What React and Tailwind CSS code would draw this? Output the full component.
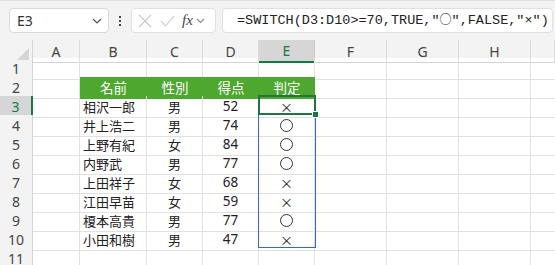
import React from 'react';

const cols = ['A', 'B', 'C', 'D', 'E', 'F', 'G', 'H', ''];

const rows = [
  ['相沢一郎', '男', 52, '×'],
  ['井上浩二', '男', 74, '○'],
  ['上野有紀', '女', 84, '○'],
  ['内野武', '男', 77, '○'],
  ['上田祥子', '女', 68, '×'],
  ['江田早苗', '女', 59, '×'],
  ['榎本高貴', '男', 77, '○'],
  ['小田和樹', '男', 47, '×'],
];

const sans = { fontFamily: '"Noto Sans", "Noto Sans CJK JP", sans-serif' };
const jp = { fontFamily: '"Noto Sans CJK JP", "Noto Sans", sans-serif' };

const Toolbar = () => (
  <div className="flex items-center h-[40px] bg-[#f3f3f3] border-t border-[#e3e3e3] pl-[9px] pr-[2px]">
    <div className="flex items-center justify-between w-[100px] h-[25px] bg-white border border-[#d9d9d9] rounded-[4px] pl-[7px] pr-[6px]">
      <span className="text-[14px] text-[#333]" style={sans}>E3</span>
      <svg width="10" height="6" viewBox="0 0 10 6"><path d="M1 1l4 4 4-4" stroke="#555" strokeWidth="1.2" fill="none" /></svg>
    </div>
    <div className="flex flex-col gap-[2px] w-[22px] items-center">
      <span className="w-[2px] h-[2px] bg-[#444]" />
      <span className="w-[2px] h-[2px] bg-[#444]" />
      <span className="w-[2px] h-[2px] bg-[#444]" />
    </div>
    <div className="flex items-center w-[85px] h-[25px] bg-white border border-[#e0e0e0] rounded-[4px] pl-[6px] gap-[8px]">
      <svg width="14" height="14" viewBox="0 0 14 14"><path d="M1 1l12 12M13 1L1 13" stroke="#c8c8c8" strokeWidth="1.1" /></svg>
      <svg width="15" height="12" viewBox="0 0 15 12"><path d="M1 6l4.5 5L14 1" stroke="#c8c8c8" strokeWidth="1.1" fill="none" /></svg>
      <span className="text-[15px] italic text-[#444] leading-none -ml-[1px]" style={{ fontFamily: '"Liberation Serif", serif' }}>fx</span>
      <svg width="9" height="6" viewBox="0 0 9 6" className="-ml-[5px]"><path d="M1 1l3.5 3.5L8 1" stroke="#888" strokeWidth="1.1" fill="none" /></svg>
    </div>
    <div className="flex items-center flex-1 ml-[6px] h-[25px] bg-white border border-[#e0e0e0] rounded-[4px] pl-[14px]">
      <span className="text-[13.5px] text-[#222] whitespace-nowrap" style={{ fontFamily: '"Liberation Mono", "Noto Sans CJK JP", monospace' }}>
        =SWITCH(D3:D10&gt;=70,TRUE,"<span className="text-[12px]" style={{ fontFamily: '"Noto Sans CJK JP", sans-serif' }}>○</span>",FALSE,"×")
      </span>
    </div>
  </div>
);

const gridCols = 'grid grid-cols-[33px_47px_67px_56px_56px_56px_72px_72px_72px_1fr]';

const Mark = ({ v }) =>
  v === '○' ? (
    <span className="block w-[13px] h-[13px] rounded-full border border-[#333]" />
  ) : (
    <span className="text-[13px] text-[#222]" style={jp}>{v}</span>
  );

const App = () => {
  const data = [null, 'head', ...rows, null];
  return (
    <div className="w-[555px] h-[265px] overflow-hidden bg-white">
      <Toolbar />
      <div className="relative">
        <div className={`${gridCols} h-[18px] bg-[#f3f3f3]`}>
          <div className="relative border-r border-[#d4d4d4]">
            <div className="absolute right-[3px] bottom-[3px] w-0 h-0 border-l-[12px] border-l-transparent border-b-[12px] border-b-[#d6d6d6]" />
          </div>
          {cols.map((c, i) => (
            <div
              key={i}
              className={
                c === 'E'
                  ? 'flex items-center justify-center bg-[#d6d6d6] border-r border-[#c8c8c8] border-b-2 border-b-[#107c41] text-[14px] text-[#107c41]'
                  : 'flex items-center justify-center border-r border-[#dcdcdc] border-b border-b-[#d4d4d4] text-[14px] text-[#444]'
              }
              style={sans}
            >
              {c}
            </div>
          ))}
        </div>
        {data.map((r, ri) => {
          const n = ri + 1;
          const sel = n === 3;
          return (
            <div key={ri} className={`${gridCols} h-[19px]`}>
              <div
                className={
                  sel
                    ? 'flex items-center justify-center bg-[#d6d6d6] border-r-2 border-[#107c41] border-b border-b-[#c8c8c8] text-[14px] text-[#107c41]'
                    : 'flex items-center justify-center bg-[#f3f3f3] border-r border-[#d4d4d4] border-b border-b-[#dcdcdc] text-[14px] text-[#444]'
                }
                style={sans}
              >
                {n}
              </div>
              <div className="border-r border-b border-[#e1e1e1]" />
              {r === 'head' ? (
                <div className="col-span-4 grid grid-cols-[67px_56px_56px_56px] bg-[#4ea72e] text-white text-[13.5px] border-b border-[#4ea72e]" style={jp}>
                  {['名前', '性別', '得点', '判定'].map((h) => (
                    <div key={h} className="flex items-center justify-center leading-none">{h}</div>
                  ))}
                </div>
              ) : r ? (
                <>
                  <div className="flex items-center pl-[3px] border-r border-b border-[#e1e1e1] text-[13px] text-[#222]" style={jp}>{r[0]}</div>
                  <div className="flex items-center justify-center border-r border-b border-[#e1e1e1] text-[13px] text-[#222]" style={jp}>{r[1]}</div>
                  <div className="flex items-center justify-center border-r border-b border-[#e1e1e1] text-[13.5px] text-[#222]" style={sans}>{r[2]}</div>
                  <div className="relative flex items-center justify-center border-r border-b border-[#e1e1e1]">
                    <Mark v={r[3]} />
                  </div>
                </>
              ) : (
                <>
                  <div className="border-r border-b border-[#e1e1e1]" />
                  <div className="border-r border-b border-[#e1e1e1]" />
                  <div className="border-r border-b border-[#e1e1e1]" />
                  <div className="border-r border-b border-[#e1e1e1]" />
                </>
              )}
              <div className="border-r border-b border-[#e1e1e1]" />
              <div className="border-r border-b border-[#e1e1e1]" />
              <div className="border-r border-b border-[#e1e1e1]" />
              <div className="border-b border-[#e1e1e1]" />
            </div>
          );
        })}
        <div className="absolute left-[258px] top-[55px] w-[58px] h-[153px] border border-[#2f6bc4] pointer-events-none" />
        <div className="absolute left-[258px] top-[55px] w-[58px] h-[20px] border-2 border-[#217346] pointer-events-none" />
        <div className="absolute left-[312px] top-[71px] w-[7px] h-[7px] bg-[#217346] border border-white pointer-events-none" />
      </div>
    </div>
  );
};

export default App;
